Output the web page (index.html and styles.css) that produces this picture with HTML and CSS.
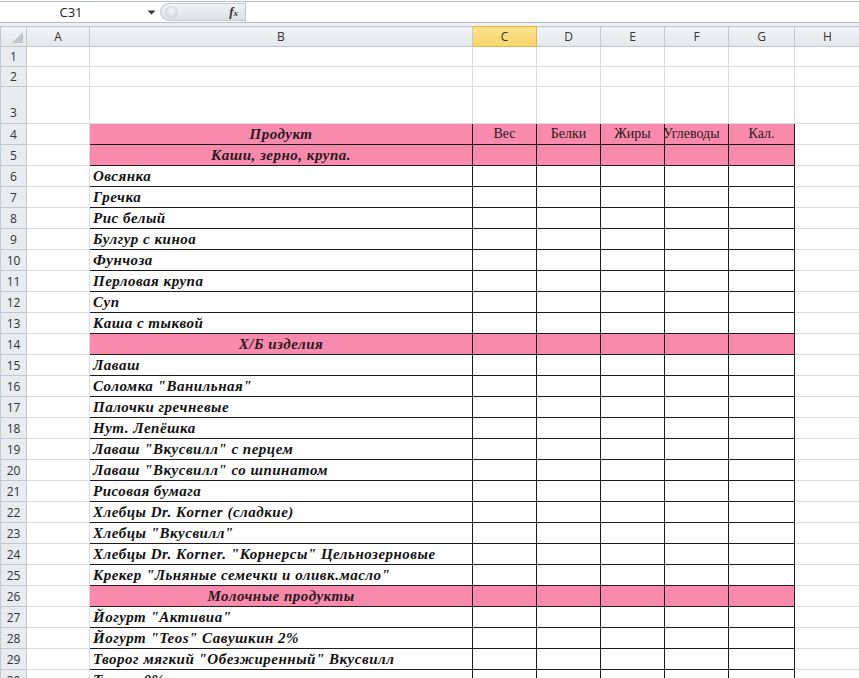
FILE: index.html
```html
<!DOCTYPE html>
<html lang="ru">
<head>
  <meta charset="UTF-8" />
  <title>Продукты</title>
  <link rel="stylesheet" href="styles.css">
</head>
<body>
  <!-- строка формул -->
  <div class="formula-bar">
    <div class="name-box">C31</div>
    <div class="name-drop">
      <svg width="9" height="5" viewBox="0 0 9 5"><path d="M0.5 0.5h8l-4 4z" fill="#333"/></svg>
    </div>
    <div class="fx-pill">
      <span class="knob"></span>
      <span class="fx">f<small>x</small></span>
    </div>
    <div class="formula-input"></div>
  </div>
  <div class="bar-gap"></div>

  <!-- лист -->
  <table class="sheet">
    <colgroup>
      <col class="c-head"><col class="c-a"><col class="c-b">
      <col class="c-n"><col class="c-n"><col class="c-n"><col class="c-n">
      <col class="c-g"><col class="c-h">
    </colgroup>
    <thead>
      <tr>
        <th class="corner"><span class="tri"></span></th>
        <th>A</th><th>B</th><th class="sel">C</th><th>D</th><th>E</th><th>F</th><th>G</th><th>H</th>
      </tr>
    </thead>
    <tbody>
      <tr class="short"><th>1</th><td></td><td></td><td></td><td></td><td></td><td></td><td></td><td></td></tr>
      <tr class="short"><th>2</th><td></td><td></td><td></td><td></td><td></td><td></td><td></td><td></td></tr>
      <tr class="tall"><th>3</th><td></td><td></td><td></td><td></td><td></td><td></td><td></td><td></td></tr>

      <tr class="pink first"><th>4</th><td></td>
        <td class="box title">Продукт</td>
        <td class="box num">Вес</td><td class="box num">Белки</td><td class="box num">Жиры</td>
        <td class="box num over">Углеводы</td><td class="box num">Кал.</td><td></td></tr>
      <tr class="pink"><th>5</th><td></td><td class="box title">Каши, зерно, крупа.</td>
        <td class="box"></td><td class="box"></td><td class="box"></td><td class="box"></td><td class="box"></td><td></td></tr>

      <tr><th>6</th><td></td><td class="box item">Овсянка</td><td class="box"></td><td class="box"></td><td class="box"></td><td class="box"></td><td class="box"></td><td></td></tr>
      <tr><th>7</th><td></td><td class="box item">Гречка</td><td class="box"></td><td class="box"></td><td class="box"></td><td class="box"></td><td class="box"></td><td></td></tr>
      <tr><th>8</th><td></td><td class="box item">Рис белый</td><td class="box"></td><td class="box"></td><td class="box"></td><td class="box"></td><td class="box"></td><td></td></tr>
      <tr><th>9</th><td></td><td class="box item">Булгур с киноа</td><td class="box"></td><td class="box"></td><td class="box"></td><td class="box"></td><td class="box"></td><td></td></tr>
      <tr><th>10</th><td></td><td class="box item">Фунчоза</td><td class="box"></td><td class="box"></td><td class="box"></td><td class="box"></td><td class="box"></td><td></td></tr>
      <tr><th>11</th><td></td><td class="box item">Перловая крупа</td><td class="box"></td><td class="box"></td><td class="box"></td><td class="box"></td><td class="box"></td><td></td></tr>
      <tr><th>12</th><td></td><td class="box item">Суп</td><td class="box"></td><td class="box"></td><td class="box"></td><td class="box"></td><td class="box"></td><td></td></tr>
      <tr><th>13</th><td></td><td class="box item">Каша с тыквой</td><td class="box"></td><td class="box"></td><td class="box"></td><td class="box"></td><td class="box"></td><td></td></tr>

      <tr class="pink"><th>14</th><td></td><td class="box title">Х/Б изделия</td>
        <td class="box"></td><td class="box"></td><td class="box"></td><td class="box"></td><td class="box"></td><td></td></tr>

      <tr><th>15</th><td></td><td class="box item">Лаваш</td><td class="box"></td><td class="box"></td><td class="box"></td><td class="box"></td><td class="box"></td><td></td></tr>
      <tr><th>16</th><td></td><td class="box item">Соломка "Ванильная"</td><td class="box"></td><td class="box"></td><td class="box"></td><td class="box"></td><td class="box"></td><td></td></tr>
      <tr><th>17</th><td></td><td class="box item">Палочки гречневые</td><td class="box"></td><td class="box"></td><td class="box"></td><td class="box"></td><td class="box"></td><td></td></tr>
      <tr><th>18</th><td></td><td class="box item">Нут. Лепёшка</td><td class="box"></td><td class="box"></td><td class="box"></td><td class="box"></td><td class="box"></td><td></td></tr>
      <tr><th>19</th><td></td><td class="box item">Лаваш "Вкусвилл" с перцем</td><td class="box"></td><td class="box"></td><td class="box"></td><td class="box"></td><td class="box"></td><td></td></tr>
      <tr><th>20</th><td></td><td class="box item">Лаваш "Вкусвилл" со шпинатом</td><td class="box"></td><td class="box"></td><td class="box"></td><td class="box"></td><td class="box"></td><td></td></tr>
      <tr><th>21</th><td></td><td class="box item">Рисовая бумага</td><td class="box"></td><td class="box"></td><td class="box"></td><td class="box"></td><td class="box"></td><td></td></tr>
      <tr><th>22</th><td></td><td class="box item">Хлебцы Dr. Korner (сладкие)</td><td class="box"></td><td class="box"></td><td class="box"></td><td class="box"></td><td class="box"></td><td></td></tr>
      <tr><th>23</th><td></td><td class="box item">Хлебцы "Вкусвилл"</td><td class="box"></td><td class="box"></td><td class="box"></td><td class="box"></td><td class="box"></td><td></td></tr>
      <tr><th>24</th><td></td><td class="box item">Хлебцы Dr. Korner. "Корнерсы" Цельнозерновые</td><td class="box"></td><td class="box"></td><td class="box"></td><td class="box"></td><td class="box"></td><td></td></tr>
      <tr><th>25</th><td></td><td class="box item">Крекер "Льняные семечки и оливк.масло"</td><td class="box"></td><td class="box"></td><td class="box"></td><td class="box"></td><td class="box"></td><td></td></tr>

      <tr class="pink"><th>26</th><td></td><td class="box title">Молочные продукты</td>
        <td class="box"></td><td class="box"></td><td class="box"></td><td class="box"></td><td class="box"></td><td></td></tr>

      <tr><th>27</th><td></td><td class="box item">Йогурт "Активиа"</td><td class="box"></td><td class="box"></td><td class="box"></td><td class="box"></td><td class="box"></td><td></td></tr>
      <tr><th>28</th><td></td><td class="box item">Йогурт "Teos" Савушкин 2%</td><td class="box"></td><td class="box"></td><td class="box"></td><td class="box"></td><td class="box"></td><td></td></tr>
      <tr><th>29</th><td></td><td class="box item">Творог мягкий "Обезжиренный" Вкусвилл</td><td class="box"></td><td class="box"></td><td class="box"></td><td class="box"></td><td class="box"></td><td></td></tr>
      <tr><th>30</th><td></td><td class="box item">Творог 0%</td><td class="box"></td><td class="box"></td><td class="box"></td><td class="box"></td><td class="box"></td><td></td></tr>
      <tr><th class="sel-row">31</th><td></td><td class="box"></td><td class="box"></td><td class="box"></td><td class="box"></td><td class="box"></td><td class="box"></td><td></td></tr>
    </tbody>
  </table>
</body>
</html>
```

FILE: styles.css
```css
/* общий фон */
body {
  margin: 0;
  background: #fff;
  font-family: "Liberation Sans", Arial, sans-serif;
  overflow: hidden;
}

/* строка формул */
.formula-bar {
  display: flex;
  height: 20px;
  margin-top: 1px;
  border-top: 1px solid #b8bdc4;
  border-bottom: 1px solid #b8bdc4;
  background: #fff;
}

.name-box {
  width: 142px;
  font-family: "Open Sans", sans-serif;
  font-size: 13px;
  line-height: 20px;
  text-align: center;
  color: #222;
}

.name-drop {
  width: 18px;
  display: flex;
  align-items: center;
  justify-content: center;
}

.fx-pill {
  width: 85px;
  margin: 1px 0;
  border: 1px solid #c3c8ce;
  border-right: none;
  border-radius: 10px 0 0 10px;
  background: linear-gradient(#f0f2f4, #dde1e6);
  display: flex;
  align-items: center;
  justify-content: space-between;
  padding: 0 7px 0 4px;
  box-sizing: border-box;
}

.knob {
  width: 11px;
  height: 11px;
  border-radius: 50%;
  background: radial-gradient(circle at 50% 35%, #fafafa, #c9cdd2);
  border: 1px solid #d3d6da;
}

.fx {
  font-family: "Liberation Serif", serif;
  font-style: italic;
  font-weight: bold;
  font-size: 13px;
  color: #333;
}

.fx small {
  font-size: 9px;
}

.formula-input {
  flex: 1;
  border-left: 1px solid #c3c8ce;
}

.bar-gap {
  height: 3px;
  background: #eef0f3;
}

/* таблица листа */
.sheet {
  border-collapse: collapse;
  table-layout: fixed;
  width: 860px;
}

.c-head { width: 26px; }
.c-a { width: 63px; }
.c-b { width: 383px; }
.c-n { width: 64px; }
.c-g { width: 66px; }
.c-h { width: 66px; }

.sheet td {
  border: 1px solid #dadcdf;
  height: 20px;
  padding: 0 3px;
  white-space: nowrap;
  overflow: hidden;
}

.sheet th {
  background: #e8ebef;
  border: 1px solid #c3c8cf;
  font-family: "Open Sans", sans-serif;
  font-weight: normal;
  font-size: 12px;
  color: #333;
  padding: 0;
}

.sheet thead th {
  height: 19px;
  background: linear-gradient(#f2f4f6, #e3e7eb);
}

.sheet tbody th {
  text-align: center;
}

.sheet thead th.sel {
  background: linear-gradient(#fbe38f, #f8d46a);
  border-color: #e7b24a;
}

.corner {
  position: relative;
}

.tri {
  position: absolute;
  right: 3px;
  bottom: 3px;
  width: 0;
  height: 0;
  border-left: 11px solid transparent;
  border-bottom: 11px solid #c2c7cd;
}

.short td { height: 19px; }
.tall td { height: 36px; }
.tall th { vertical-align: bottom; padding-bottom: 2px; }

/* блок с данными */
.sheet td.box {
  border: 1px solid #1c1c1c;
}

.pink td.box {
  background: #f88bad;
}

.item {
  font-family: "Liberation Serif", serif;
  font-weight: bold;
  font-style: italic;
  font-size: 15px;
  letter-spacing: 0.5px;
  color: #111;
}

.title {
  font-family: "Liberation Serif", serif;
  font-weight: bold;
  font-style: italic;
  font-size: 15px;
  letter-spacing: 0.5px;
  text-align: center;
  color: #2a1820;
}

.num {
  font-family: "Liberation Serif", serif;
  font-size: 14px;
  text-align: center;
  color: #2a1820;
}

.sheet td.over {
  padding: 0;
  text-align: left;
  text-indent: -2px;
}

.sel-row {
  background: #f8d46a !important;
}
```
